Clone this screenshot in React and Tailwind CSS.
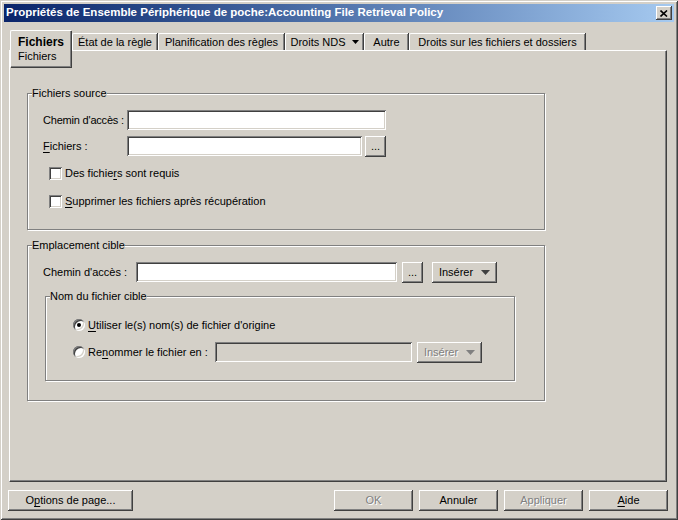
const FONT = "font-['Liberation_Sans',Arial,sans-serif]";

const raised =
  'bg-[#d4d0c8] shadow-[inset_-1px_-1px_0_#404040,inset_1px_1px_0_#fff,inset_-2px_-2px_0_#808080]';
const sunken =
  'shadow-[inset_1px_1px_0_#808080,inset_-1px_-1px_0_#fff,inset_2px_2px_0_#404040,inset_-2px_-2px_0_#d4d0c8]';
const disabledText = 'text-[#808080] [text-shadow:1px_1px_0_#fff]';

function Caret({ disabled, small }) {
  return small ? (
    <svg width="7" height="4" viewBox="0 0 7 4" className="shrink-0">
      <path d="M0 0h7L3.5 4z" fill="#000" />
    </svg>
  ) : (
    <svg width="9" height="5" viewBox="0 0 9 5" className="shrink-0">
      <path d="M0 0h9L4.5 5z" fill={disabled ? '#808080' : '#404040'} />
    </svg>
  );
}

function Button({ className = '', disabled, children }) {
  return (
    <div className={`${raised} h-[21px] shrink-0 flex items-center justify-center ${disabled ? disabledText : ''} ${className}`}>
      {children}
    </div>
  );
}

function Input({ className = '', disabled }) {
  return <div className={`${sunken} h-[20px] shrink-0 ${disabled ? 'bg-[#d4d0c8]' : 'bg-white'} ${className}`} />;
}

function Checkbox() {
  return <div className={`${sunken} w-[13px] h-[13px] bg-white shrink-0`} />;
}

function Radio({ checked }) {
  return (
    <div className="w-[12px] h-[12px] rounded-full bg-white shrink-0 flex items-center justify-center shadow-[inset_1px_1px_0_#808080,inset_-1px_-1px_0_#fff,inset_2px_2px_0_#404040,inset_-2px_-2px_0_#d4d0c8]">
      {checked && <div className="w-[4px] h-[4px] rounded-full bg-black" />}
    </div>
  );
}

function Group({ title, className = '', children }) {
  return (
    <fieldset className={`border border-[#808080] shadow-[inset_1px_1px_0_#fff,1px_1px_0_#fff] m-0 p-0 ${className}`}>
      <legend className="ml-[4px] px-0 leading-[12px] bg-[#d4d0c8]">{title}</legend>
      {children}
    </fieldset>
  );
}

function Tab({ w, children }) {
  return (
    <div
      className={`h-[17px] ${w} flex items-center justify-center gap-[6px] border-l border-t border-white rounded-tl-[2px] shadow-[inset_-1px_0_0_#808080,1px_0_0_#404040] mr-[1px]`}
    >
      {children}
    </div>
  );
}

export default function App() {
  return (
    <div
      className={`${FONT} text-[11px] text-black whitespace-nowrap w-[678px] h-[520px] bg-[#d4d0c8] p-[4px] flex flex-col shadow-[inset_1px_1px_0_#d4d0c8,inset_-1px_-1px_0_#404040,inset_2px_2px_0_#fff,inset_-2px_-2px_0_#808080]`}
    >
      {/* title bar */}
      <div className="h-[18px] flex items-center justify-between pl-[2px] pr-[2px] bg-gradient-to-r from-[#0a246a] to-[#a6caf0]">
        <span className="text-white font-bold text-[11.5px] leading-none">
          Propriétés de Ensemble Périphérique de poche:Accounting File Retrieval Policy
        </span>
        <div className={`${raised} w-[16px] h-[14px] flex items-center justify-center`}>
          <svg width="8" height="7" viewBox="0 0 8 7">
            <path d="M0.5 0.5L7 6.5M7 0.5L0.5 6.5" stroke="#000" strokeWidth="1.6" />
          </svg>
        </div>
      </div>

      <div className="flex flex-col pl-[5px] pr-[7px]">
        {/* tabs */}
        <div className="mt-[8px] h-[20px] flex items-end">
          <div className="relative z-10 self-start ml-[1px] mr-[1px] w-[61px] h-[37px] bg-[#d4d0c8] border-l border-t border-white rounded-tl-[2px] shadow-[inset_-1px_-1px_0_#808080,1px_1px_0_#404040] pl-[7px] pt-[4px] leading-[14px]">
            <div className="font-bold text-[12px]">Fichiers</div>
            <div>Fichiers</div>
          </div>
          <Tab w="w-[85px]">État de la règle</Tab>
          <Tab w="w-[126px]">Planification des règles</Tab>
          <Tab w="w-[78px]">
            <span>Droits NDS</span>
            <Caret small />
          </Tab>
          <Tab w="w-[44px]">Autre</Tab>
          <Tab w="w-[176px]">Droits sur les fichiers et dossiers</Tab>
        </div>

        {/* panel */}
        <div className="h-[432px] border-l border-t border-white border-r border-b border-r-[#404040] border-b-[#404040] shadow-[inset_-1px_-1px_0_#808080] pl-[17px]">
          <div className="mt-[36px] w-[518px] flex flex-col">
            <Group title="Fichiers source">
              <div className="pl-[15px] pt-[11px] pb-[18px] flex flex-col">
                <div className="h-[20px] flex items-center">
                  <span className="w-[84px] shrink-0 tracking-[-0.2px]">Chemin d'accès :</span>
                  <Input className="w-[259px]" />
                </div>
                <div className="mt-[6px] h-[20px] flex items-center">
                  <span className="w-[84px] shrink-0">
                    <u className="underline-offset-[2px]">F</u>ichiers :
                  </span>
                  <Input className="w-[235px]" />
                  <Button className="ml-[3px] w-[21px] h-[20px]">...</Button>
                </div>
                <div className="mt-[7px] h-[20px] flex items-center pl-[6px] gap-[3px]">
                  <Checkbox />
                  <span>
                    Des fichie<u className="underline-offset-[2px]">r</u>s sont requis
                  </span>
                </div>
                <div className="mt-[8px] h-[20px] flex items-center pl-[6px] gap-[3px]">
                  <Checkbox />
                  <span>
                    <u className="underline-offset-[2px]">S</u>upprimer les fichiers après récupération
                  </span>
                </div>
              </div>
            </Group>

            <Group title="Emplacement cible" className="mt-[9px]">
              <div className="pl-[15px] pt-[11px] pb-[19px] flex flex-col">
                <div className="h-[20px] flex items-center">
                  <span className="w-[93px] shrink-0">Chemin d'accès :</span>
                  <Input className="w-[261px]" />
                  <Button className="ml-[5px] w-[21px] h-[20px]">...</Button>
                  <Button className="ml-[9px] w-[65px] gap-[8px]">
                    <span>Insérer</span>
                    <Caret />
                  </Button>
                </div>

                <Group title="Nom du fichier cible" className="mt-[8px] ml-[2px] w-[470px]">
                  <div className="pl-[27px] pt-[13px] pb-[18px] flex flex-col">
                    <div className="h-[20px] flex items-center gap-[3px]">
                      <Radio checked />
                      <span>
                        <u className="underline-offset-[2px]">U</u>tiliser le(s) nom(s) de fichier d'origine
                      </span>
                    </div>
                    <div className="mt-[7px] h-[20px] flex items-center">
                      <div className="w-[142px] shrink-0 flex items-center gap-[3px]">
                        <Radio />
                        <span>
                          Re<u className="underline-offset-[2px]">n</u>ommer le fichier en :
                        </span>
                      </div>
                      <Input disabled className="w-[197px]" />
                      <Button disabled className="ml-[5px] w-[65px] gap-[8px]">
                        <span>Insérer</span>
                        <Caret disabled />
                      </Button>
                    </div>
                  </div>
                </Group>
              </div>
            </Group>
          </div>
        </div>

        {/* bottom buttons */}
        <div className="mt-[8px] flex items-center -ml-[1px]">
          <Button className="w-[125px]">
            <span>
              O<u className="underline-offset-[2px]">p</u>tions de page...
            </span>
          </Button>
          <div className="ml-auto flex gap-[6px] mr-[-1px]">
            <Button disabled className="w-[79px]">OK</Button>
            <Button className="w-[79px]">Annuler</Button>
            <Button disabled className="w-[79px]">Appliquer</Button>
            <Button className="w-[79px]">
              <span>
                <u className="underline-offset-[2px]">A</u>ide
              </span>
            </Button>
          </div>
        </div>
      </div>
    </div>
  );
}
